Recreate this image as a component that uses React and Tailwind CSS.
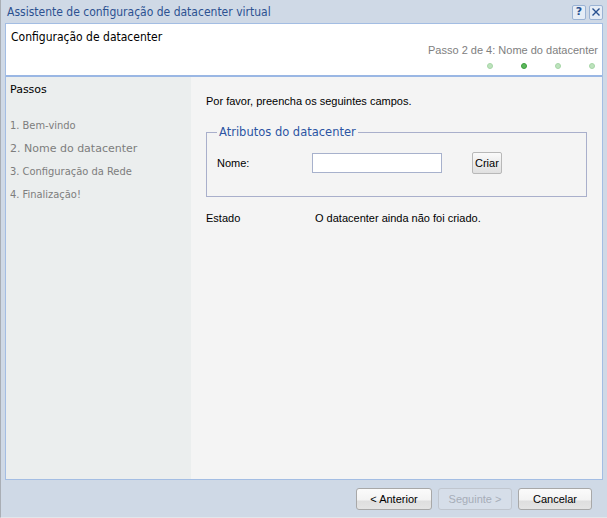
export default function App() {
  const dv = { fontFamily: '"DejaVu Sans", sans-serif' };
  const dvc = { fontFamily: '"DejaVu Sans Condensed", "DejaVu Sans", sans-serif' };
  const ls = { fontFamily: '"Liberation Sans", Arial, sans-serif' };
  return (
    <div className="w-[607px] h-[518px] bg-[#cfd9e6] flex flex-col border-l border-l-[#a9aeb5] border-b border-b-[#e2e6ea] overflow-hidden">
      {/* title bar */}
      <div className="h-[23px] flex items-center justify-between pl-[6px] pr-[4px]">
        <span className="text-[12px] text-[#2c5191]" style={dvc}>Assistente de configuração de datacenter virtual</span>
        <div className="flex gap-[3px] mt-[1px]">
          <div className="w-[14px] h-[15px] rounded-[2px] border border-[#9bb3d4] bg-[#e6edf6] flex items-center justify-center text-[11px] font-bold text-[#28508f]" style={dv}>?</div>
          <div className="w-[14px] h-[15px] rounded-[2px] border border-[#9bb3d4] bg-[#e6edf6] flex items-center justify-center">
            <svg width="10" height="10" viewBox="0 0 10 10"><path d="M1.5 1.5 L8.5 8.5 M8.5 1.5 L1.5 8.5" stroke="#28508f" strokeWidth="1.4" /></svg>
          </div>
        </div>
      </div>
      {/* main frame */}
      <div className="mx-[4px] flex flex-col h-[457px] border border-[#a3bde3]">
        <div className="h-[53px] bg-white border-b-2 border-b-[#9ab7e4] flex flex-col">
          <div className="pl-[5px] pt-[6px] text-[12px] text-black leading-[14px]" style={dvc}>Configuração de datacenter</div>
          <div className="text-right pr-[4px] mt-[0px] text-[11px] text-[#808080] leading-[13px]" style={ls}>Passo 2 de 4: Nome do datacenter</div>
          <div className="flex justify-end pr-[7px] mt-[6px] gap-[28px]">
            <span className="w-[6px] h-[6px] rounded-full bg-[#bde3bd] border border-[#a6d6a6]" />
            <span className="w-[6px] h-[6px] rounded-full bg-[#5cb85c] border border-[#3e9e3e]" />
            <span className="w-[6px] h-[6px] rounded-full bg-[#bde3bd] border border-[#a6d6a6]" />
            <span className="w-[6px] h-[6px] rounded-full bg-[#bde3bd] border border-[#a6d6a6]" />
          </div>
        </div>
        <div className="flex flex-1">
          <div className="w-[185px] bg-[#ebeeee] pl-[4px] pt-[6px]">
            <div className="text-[11px] text-black leading-[14px]" style={dv}>Passos</div>
            <div className="mt-[22px] flex flex-col gap-[9px] text-[11px] text-[#7d7d7d] leading-[14px]">
              <div style={dvc}>1. Bem-vindo</div>
              <div style={dv}>2. Nome do datacenter</div>
              <div style={dvc}>3. Configuração da Rede</div>
              <div style={dvc}>4. Finalização!</div>
            </div>
          </div>
          <div className="flex-1 bg-[#f4f4f4] pl-[15px] pr-[15px] pt-[17px]" style={ls}>
            <div className="text-[11px] text-black leading-[14px]">Por favor, preencha os seguintes campos.</div>
            <fieldset className="mt-[17px] border border-[#a9afcb] h-[72px] px-[10px]">
              <legend className="px-[2px] text-[11.5px] text-[#2c54a3] leading-[14px]" style={dv}>Atributos do datacenter</legend>
              <div className="flex items-center mt-[13px]">
                <span className="w-[95px] text-[11px] text-black">Nome:</span>
                <div className="w-[130px] h-[20px] bg-white border border-[#a7b1cc]" />
                <button className="ml-[30px] h-[22px] px-[2px] rounded-[2px] border border-[#b8b8b8] bg-gradient-to-b from-[#fafafa] to-[#e0e0e0] text-[11px] text-black">Criar</button>
              </div>
            </fieldset>
            <div className="flex mt-[14px] text-[11px] text-black leading-[14px]">
              <span className="w-[109px]">Estado</span>
              <span>O datacenter ainda não foi criado.</span>
            </div>
          </div>
        </div>
      </div>
      {/* footer */}
      <div className="flex justify-end gap-[6px] pr-[15px] pt-[8px]" style={ls}>
        <button className="w-[76px] h-[22px] rounded-[3px] border border-[#a8a8a8] bg-[linear-gradient(#fbfbfb_0%,#f3f3f3_55%,#dedede_60%,#e4e4e4_100%)] text-[11px] text-black">&lt; Anterior</button>
        <button className="w-[74px] h-[22px] rounded-[3px] border border-[#c0c6cf] bg-[#d6dee9] text-[11px] text-[#a6adb8]">Seguinte &gt;</button>
        <button className="w-[74px] h-[22px] rounded-[3px] border border-[#a8a8a8] bg-[linear-gradient(#fbfbfb_0%,#f3f3f3_55%,#dedede_60%,#e4e4e4_100%)] text-[11px] text-black">Cancelar</button>
      </div>
    </div>
  );
}
